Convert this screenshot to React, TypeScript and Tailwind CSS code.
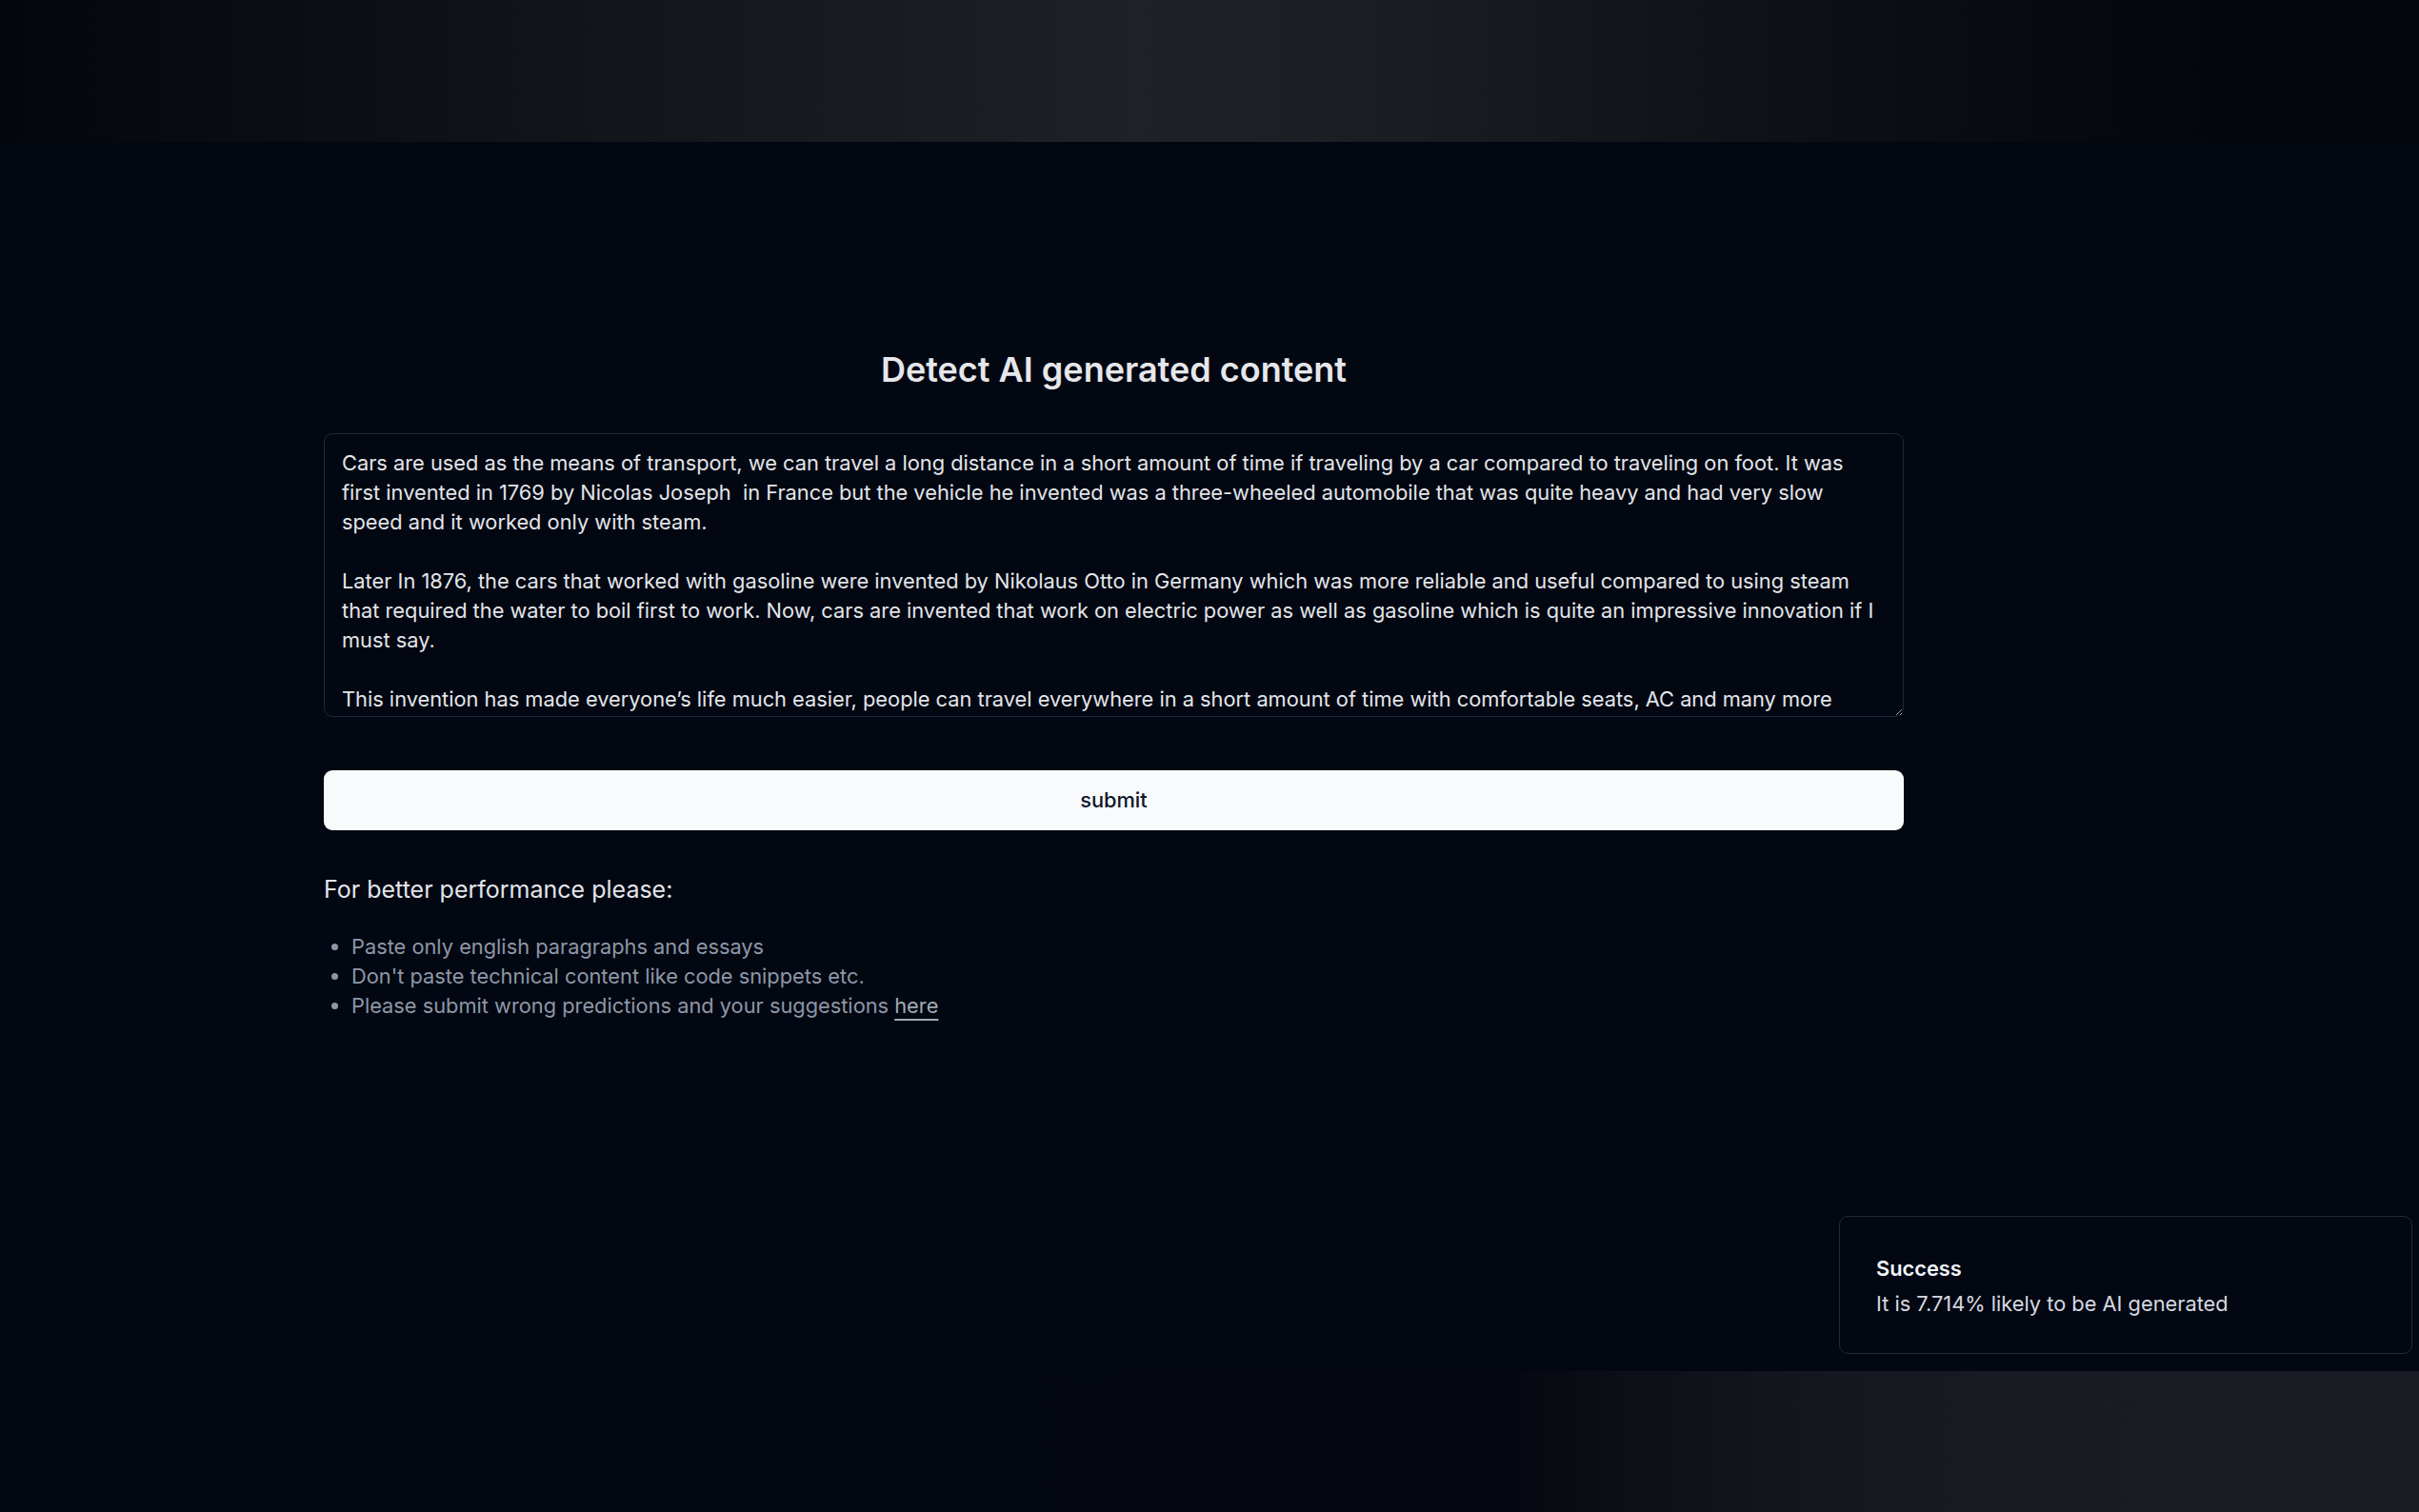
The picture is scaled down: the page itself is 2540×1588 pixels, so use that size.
const essay = `Cars are used as the means of transport, we can travel a long distance in a short amount of time if traveling by a car compared to traveling on foot. It was first invented in 1769 by Nicolas Joseph  in France but the vehicle he invented was a three-wheeled automobile that was quite heavy and had very slow speed and it worked only with steam.

Later In 1876, the cars that worked with gasoline were invented by Nikolaus Otto in Germany which was more reliable and useful compared to using steam that required the water to boil first to work. Now, cars are invented that work on electric power as well as gasoline which is quite an impressive innovation if I must say.

This invention has made everyone’s life much easier, people can travel everywhere in a short amount of time with comfortable seats, AC and many more features. It has also helped goods to be transported from one place to another quickly.`;

const tips = [
  "Paste only english paragraphs and essays",
  "Don't paste technical content like code snippets etc.",
];

const Toast = () => (
  <div className="absolute left-[1931px] top-[1277px] w-[602px] h-[145px] rounded-[9px] border border-[#1e293b] bg-[#030711] pl-[38px] pt-[39px] flex flex-col gap-[6px]">
    <div className="text-[21.8px] leading-[31px] font-semibold text-[#f1f5f9]">Success</div>
    <div className="text-[21.8px] leading-[31px] text-[#d5d9e0]">It is 7.714% likely to be AI generated</div>
  </div>
);

export default function App() {
  return (
    <div
      className="relative h-[1588px] w-full overflow-hidden bg-[#030711] flex flex-col"
      style={{ fontFamily: "Inter, 'Noto Sans', sans-serif" }}
    >
      <div className="h-[149px] w-full shrink-0 bg-[linear-gradient(90deg,#04060e_0%,#0a0c13_10%,#13151b_25%,#1b1d23_40%,#1f2128_47%,#1c1e24_56%,#111319_70%,#080a12_84%,#04060e_92%)]" />

      <main className="ml-[340px] w-[1659px] mt-[219px] flex flex-col">
        <h1 className="text-center text-[36px] leading-[40px] font-semibold text-[#e5e7eb]">
          Detect AI generated content
        </h1>

        <textarea
          className="mt-[47px] h-[298px] w-full rounded-[9px] border border-[#1e293b] bg-transparent px-[18px] pt-[15px] pb-[12px] text-[21.8px] leading-[31px] text-[#e2e5ea] outline-none overflow-hidden"
          defaultValue={essay}
        />

        <button className="mt-[56px] h-[63px] w-full rounded-[9px] bg-[#f8fafc] text-[21.8px] font-medium text-[#0f172a]">
          submit
        </button>

        <p className="mt-[44px] text-[25px] leading-[36px] text-[#e2e5ea]">For better performance please:</p>

        <ul className="mt-[27px] list-disc pl-[29px] text-[21.8px] leading-[31px] text-[#8d97a7]">
          {tips.map((t) => (
            <li key={t}>{t}</li>
          ))}
          <li>
            Please submit wrong predictions and your suggestions{" "}
            <a href="#" className="underline underline-offset-[6px] text-[#a1aab8]">
              here
            </a>
          </li>
        </ul>
      </main>

      <div className="mt-auto h-[148px] w-full shrink-0 bg-[linear-gradient(90deg,#030711_0%,#040810_40%,#04070f_62%,#0c0f16_67%,#14171e_75%,#181b22_83%,#1a1d24_100%)]" />

      <Toast />
    </div>
  );
}
